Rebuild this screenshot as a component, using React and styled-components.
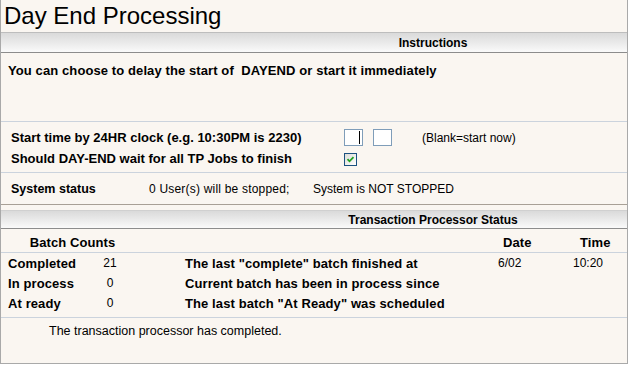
import React from "react";
import styled, { createGlobalStyle } from "styled-components";

const Global = createGlobalStyle`
  html, body { margin: 0; padding: 0; background: #ffffff; }
  body { font-family: "Liberation Sans", Arial, sans-serif; color: #000; }
  * { box-sizing: border-box; }
`;

const Page = styled.div`
  width: 628px;
  height: 364px;
  background: #faf6f1;
  border: 1px solid #a9a9a9;
  border-top: none;
  display: flex;
  flex-direction: column;
  overflow: hidden;
`;

const Title = styled.h1`
  margin: 0;
  height: 33px;
  padding: 4px 0 0 3px;
  font-size: 24px;
  font-weight: normal;
  line-height: 24px;
  border-bottom: 1px solid #bdbdbd;
`;

const HeaderBar = styled.div`
  height: ${(p) => p.$h}px;
  flex: none;
  background: linear-gradient(to bottom, #dadada, #f0f0f0 70%, #fafafa);
  border-bottom: 1px solid #8c8c8c;
  border-top: ${(p) => (p.$top ? "1px solid #d0d0d0" : "none")};
  display: flex;
  align-items: center;
  justify-content: center;
  padding-left: 238px;
  font-size: 12px;
  font-weight: bold;
`;

const Instructions = styled.div`
  height: 69px;
  flex: none;
  padding: 10px 0 0 7px;
  font-size: 13px;
  font-weight: bold;
  line-height: 15px;
  letter-spacing: 0.1px;
  border-bottom: 1px solid #cbd3dd;
`;

const FormSection = styled.div`
  height: 51px;
  flex: none;
  padding: 5px 0 0 10px;
  border-bottom: 1px solid #cbd3dd;
  display: grid;
  grid-template-columns: 333px auto;
  grid-auto-rows: 21px;
  font-size: 12px;
`;

const Label = styled.div`
  font-weight: bold;
  font-size: 13px;
  display: flex;
  align-items: center;
`;

const Controls = styled.div`
  display: flex;
  align-items: center;
`;

const TimeBox = styled.span`
  width: 19px;
  height: 17px;
  border: 1px solid #7f9db9;
  background: #fff;
  margin-right: ${(p) => p.$mr}px;
  display: flex;
  align-items: center;
  justify-content: flex-end;
  padding-right: 2px;
`;

const Caret = styled.span`
  width: 1px;
  height: 13px;
  background: #000;
`;

const Hint = styled.span`
  font-size: 12px;
`;

const CheckBox = styled.span`
  width: 13px;
  height: 13px;
  margin-top: 1px;
  border: 1px solid #1c5180;
  background: linear-gradient(135deg, #dcdcd7, #ffffff);
  display: flex;
  align-items: center;
  justify-content: center;
`;

const StatusRow = styled.div`
  height: 32px;
  flex: none;
  padding: 0 0 0 10px;
  border-bottom: 1px solid #a8a096;
  display: flex;
  align-items: center;
  font-size: 12px;
`;

const StatusCell = styled.span`
  width: ${(p) => p.$w}px;
  font-weight: ${(p) => (p.$bold ? "bold" : "normal")};
  font-size: ${(p) => (p.$bold ? 12.5 : 12)}px;
  letter-spacing: ${(p) => p.$ls || 0}px;
`;

const Spacer = styled.div`
  height: 5px;
  flex: none;
`;

const Table = styled.div`
  display: grid;
  grid-template-columns: 80px 44px 366px 75px 1fr;
  padding-left: 7px;
  font-size: 12px;
`;

const HeadRow = styled(Table)`
  height: 24px;
  flex: none;
  align-items: center;
  border-bottom: 1px solid #cbd3dd;
  padding-top: 4px;
`;

const Body = styled.div`
  height: 65px;
  flex: none;
  border-bottom: 1px solid #cbd3dd;
`;

const DataRow = styled(Table)`
  height: 20px;
  align-items: center;
`;

const Cell = styled.span`
  font-weight: ${(p) => (p.$bold ? "bold" : "normal")};
  font-size: ${(p) => (p.$bold ? 13 : 12)}px;
  letter-spacing: ${(p) => (p.$bold ? 0.1 : 0)}px;
  text-align: ${(p) => p.$align || "left"};
  padding-left: ${(p) => p.$pl || 0}px;
  grid-column: ${(p) => p.$span || "auto"};
  white-space: nowrap;
`;

const Footer = styled.div`
  padding: 6px 0 0 48px;
  font-size: 12.5px;
  line-height: 15px;
`;

const rows = [
  { label: "Completed", count: "21", desc: 'The last "complete" batch finished at', date: "6/02", time: "10:20" },
  { label: "In process", count: "0", desc: "Current batch has been in process since", date: "", time: "" },
  { label: "At ready", count: "0", desc: 'The last batch "At Ready" was scheduled', date: "", time: "" },
];

export default function App() {
  return (
    <>
      <Global />
      <Page>
        <Title>Day End Processing</Title>
        <HeaderBar $h={20}>Instructions</HeaderBar>
        <Instructions>
          You can choose to delay the start of&nbsp; DAYEND or start it immediately
        </Instructions>
        <FormSection>
          <Label>Start time by 24HR clock (e.g. 10:30PM is 2230)</Label>
          <Controls>
            <TimeBox $mr={10}>
              <Caret />
            </TimeBox>
            <TimeBox $mr={30} />
            <Hint>(Blank=start now)</Hint>
          </Controls>
          <Label>Should DAY-END wait for all TP Jobs to finish</Label>
          <Controls>
            <CheckBox>
              <svg width="9" height="9" viewBox="0 0 9 9">
                <path d="M1.5 4.2 L3.5 6.3 L7.5 2.2" fill="none" stroke="#21a121" strokeWidth="1.8" />
              </svg>
            </CheckBox>
          </Controls>
        </FormSection>
        <StatusRow>
          <StatusCell $w={138} $bold>System status</StatusCell>
          <StatusCell $w={164} $ls={0.2}>0 User(s) will be stopped;</StatusCell>
          <StatusCell>System is NOT STOPPED</StatusCell>
        </StatusRow>
        <Spacer />
        <HeaderBar $h={19} $top>Transaction Processor Status</HeaderBar>
        <HeadRow>
          <Cell $bold $span="1 / 3" $align="center" $pl={5}>Batch Counts</Cell>
          <Cell />
          <Cell $bold $pl={5}>Date</Cell>
          <Cell $bold $pl={7}>Time</Cell>
        </HeadRow>
        <Body>
          {rows.map((r) => (
            <DataRow key={r.label}>
              <Cell $bold>{r.label}</Cell>
              <Cell $align="center">{r.count}</Cell>
              <Cell $bold $pl={53}>{r.desc}</Cell>
              <Cell>{r.date}</Cell>
              <Cell>{r.time}</Cell>
            </DataRow>
          ))}
        </Body>
        <Footer>The transaction processor has completed.</Footer>
      </Page>
    </>
  );
}
